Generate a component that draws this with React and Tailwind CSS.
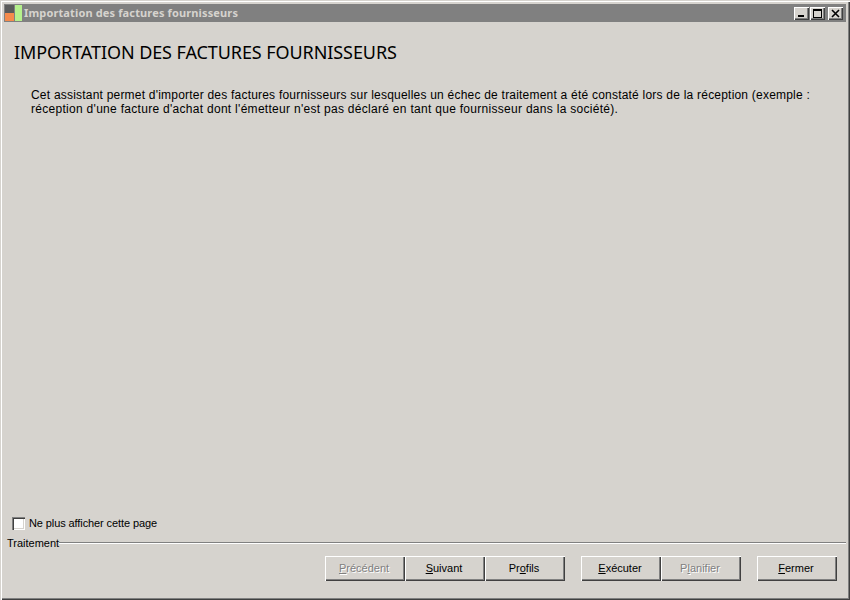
import React from 'react';

const bevel = 'shadow-[inset_1px_1px_0_#ffffff,inset_-1px_-1px_0_#404040,inset_-2px_-2px_0_#808080]';

const WinButton = ({ children, className }) => (
  <div className={`w-[15px] h-[13px] bg-[#d6d3ce] flex items-center justify-center ${bevel} ${className || ''}`}>
    {children}
  </div>
);

const Button = ({ before, mark, after, disabled, className }) => (
  <button
    className={`w-[80px] h-[25px] bg-[#d6d3ce] text-[11px] pb-px pr-[2px] font-['Liberation_Sans',sans-serif] ${bevel} ${
      disabled ? 'text-[#808080] [text-shadow:1px_1px_0_#ffffff]' : 'text-black'
    } ${className || ''}`}
  >
    {before}
    <span className="underline">{mark}</span>
    {after}
  </button>
);

export default function App() {
  return (
    <div className="w-[850px] h-[600px] bg-[#d6d3ce] flex flex-col p-1 shadow-[inset_1px_1px_0_#d6d3ce,inset_2px_2px_0_#ffffff,inset_-1px_-1px_0_#404040,inset_-2px_-2px_0_#808080] font-['Noto_Sans','DejaVu_Sans',sans-serif] text-black">
      {/* Title bar */}
      <div className="h-[18px] bg-[#808080] flex items-center shrink-0">
        <svg width="18" height="18" viewBox="0 0 18 18" className="ml-px shrink-0">
          <rect x="0" y="1" width="9" height="8" fill="#5a5a5a" />
          <rect x="0" y="9" width="9" height="8" fill="#f58a4b" />
          <rect x="10" y="1" width="7" height="16" fill="#b5f08c" />
        </svg>
        <span className="ml-[1px] -mt-px text-[11px] font-bold tracking-[0.14px] text-[#d6d3ce] leading-none">Importation des factures fournisseurs</span>
        <div className="ml-auto flex items-center mr-[3px]">
          <WinButton className="mr-px">
            <div className="w-[6px] h-[2px] bg-black mt-[6px] mr-[2px]" />
          </WinButton>
          <WinButton className="mr-[3px]">
            <div className="w-[9px] h-[9px] border border-black border-t-2" />
          </WinButton>
          <WinButton>
            <svg width="9" height="9" viewBox="0 0 9 9">
              <path d="M1 1 L8 8 M8 1 L1 8" stroke="#000" strokeWidth="1.6" />
            </svg>
          </WinButton>
        </div>
      </div>

      {/* Content */}
      <div className="flex-1 flex flex-col">
        <h1 className="ml-[10px] mt-[20px] text-[18px] leading-[20px] font-normal tracking-[-0.08px] whitespace-nowrap">
          IMPORTATION DES FACTURES FOURNISSEURS
        </h1>
        <div className="ml-[27px] mr-[36px] mt-[26px] text-[12px] leading-[14px] font-['Liberation_Sans',sans-serif]">
          <p className="tracking-[0.2px] text-justify [text-align-last:justify]">
            Cet assistant permet d'importer des factures fournisseurs sur lesquelles un échec de traitement a été constaté lors de la réception (exemple :
          </p>
          <p className="tracking-[0.29px]">
            réception d'une facture d'achat dont l'émetteur n'est pas déclaré en tant que fournisseur dans la société).
          </p>
        </div>

        <label className="mt-auto ml-2 flex items-center gap-[4px] text-[11px] tracking-[-0.1px] leading-[13px] font-['Liberation_Sans',sans-serif]">
          <span className="w-[13px] h-[13px] bg-white shrink-0 shadow-[inset_1px_1px_0_#808080,inset_2px_2px_0_#404040,inset_-1px_-1px_0_#ffffff,inset_-2px_-2px_0_#d6d3ce]" />
          Ne plus afficher cette page
        </label>

        {/* Group line */}
        <div className="mt-[6px] ml-[3px] flex items-center h-[14px]">
          <span className="text-[11px] leading-[14px] font-['Liberation_Sans',sans-serif]">Traitement</span>
          <div className="flex-1 h-[2px] border-t border-t-[#808080] border-b border-b-white" />
        </div>

        {/* Buttons */}
        <div className="mt-[6px] mb-[15px] flex justify-end pr-[9px]">
          <Button before="" mark="P" after="récédent" disabled />
          <Button before="" mark="S" after="uivant" />
          <Button before="Pr" mark="o" after="fils" className="mr-4" />
          <Button before="" mark="E" after="xécuter" />
          <Button before="P" mark="l" after="anifier" disabled className="mr-4" />
          <Button before="" mark="F" after="ermer" />
        </div>
      </div>
    </div>
  );
}
